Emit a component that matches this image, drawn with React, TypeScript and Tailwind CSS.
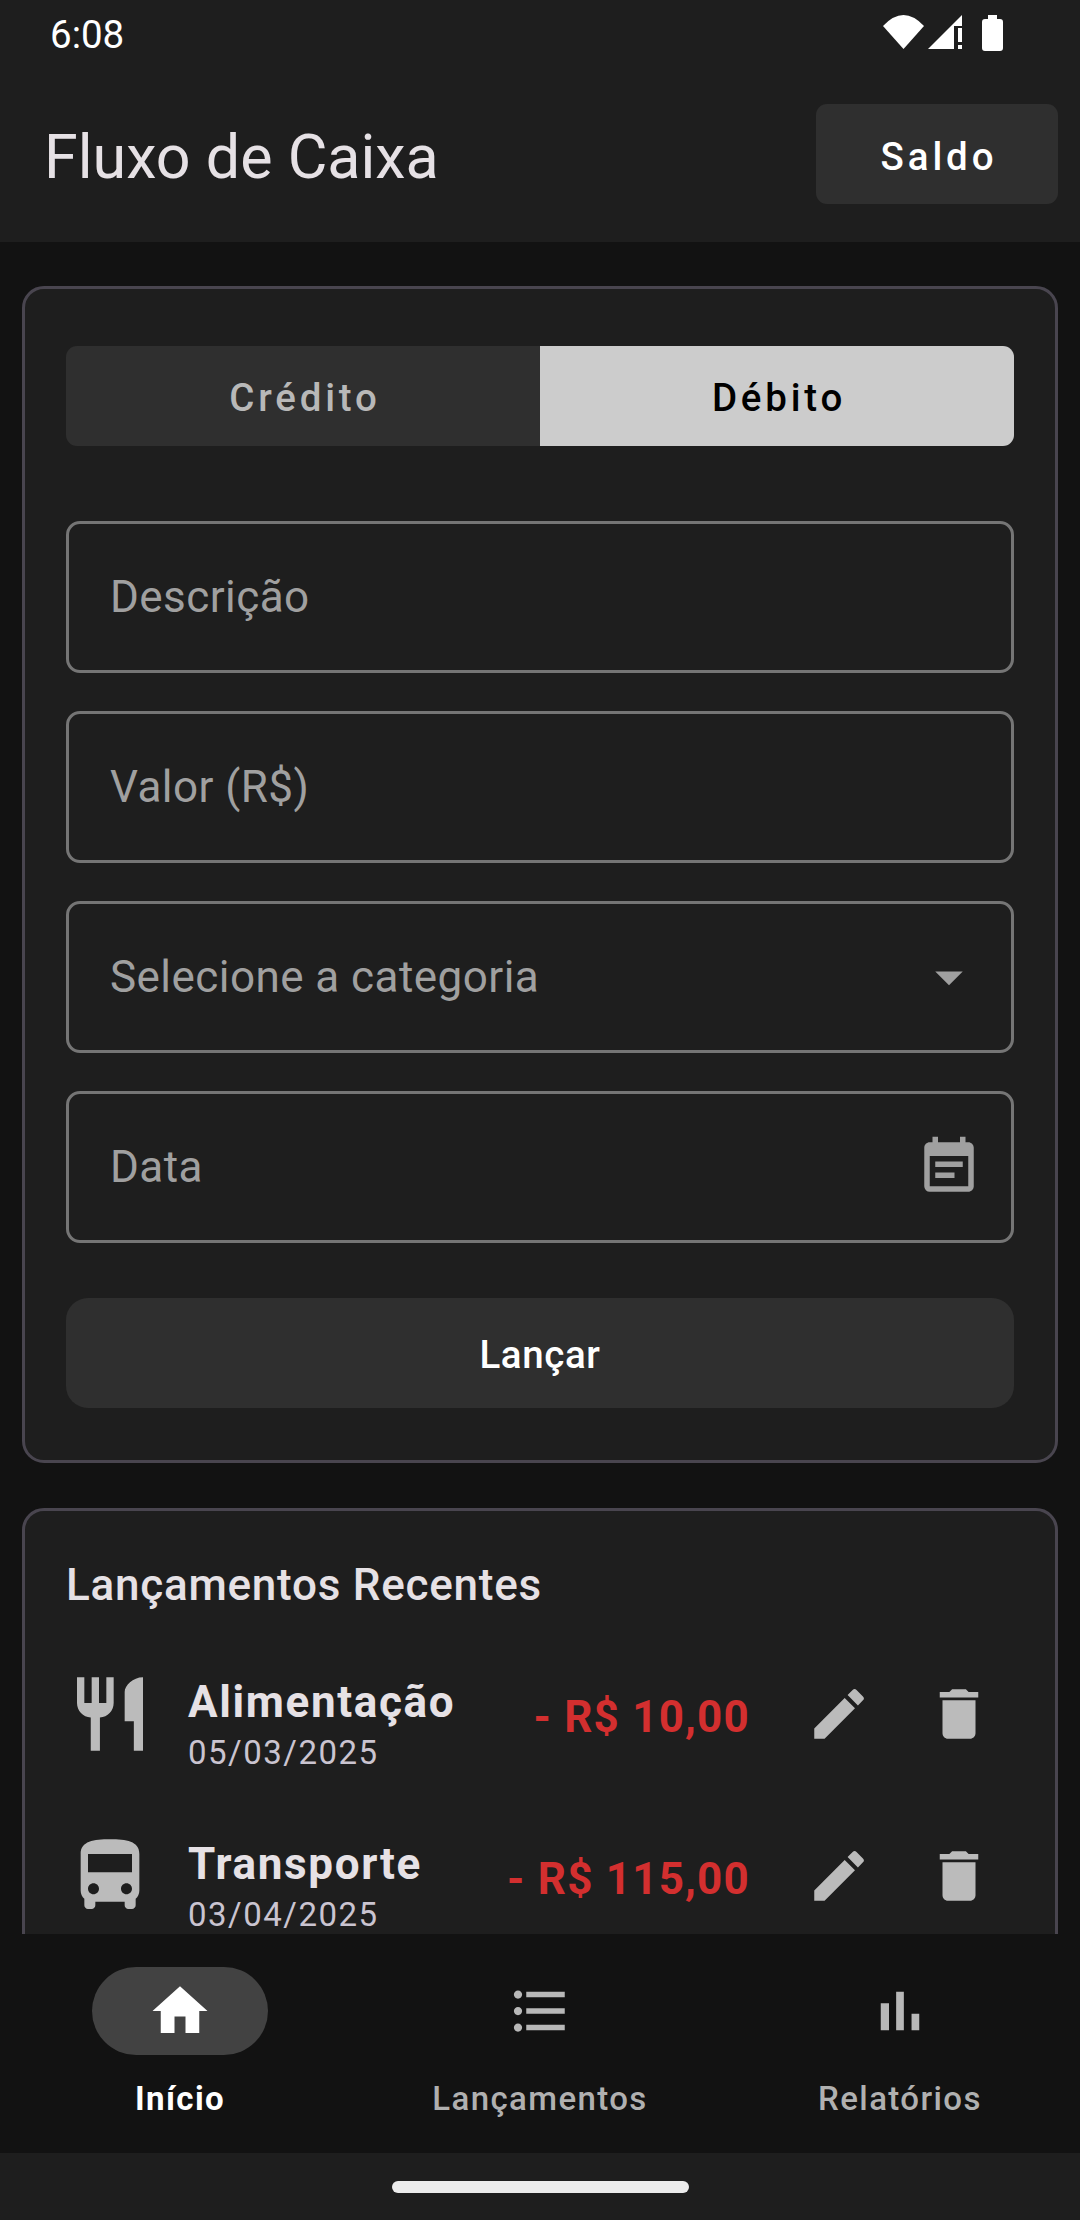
import {
  MdRestaurant,
  MdDirectionsBus,
  MdEdit,
  MdDelete,
  MdHome,
  MdFormatListBulleted,
  MdEventNote,
  MdArrowDropDown,
} from "react-icons/md";
import type { ReactNode } from "react";

const StatusIcons = () => (
  <div className="flex items-start gap-[4px]">
    <svg width="41" height="34" viewBox="0 0 41 34" fill="#fff">
      <path d="M0 11Q20.5 -11 41 11L20.5 34Z" />
    </svg>
    <svg width="34" height="34" viewBox="0 0 34 34" fill="#fff">
      <path d="M0 34L34 0V11H26V34Z" />
      <rect x="30" y="13" width="4" height="14" />
      <rect x="30" y="30" width="4" height="4" />
    </svg>
    <svg width="21" height="36" viewBox="0 0 21 36" fill="#fff" className="ml-[16px]">
      <path d="M6 0H15V4H18Q21 4 21 7V33Q21 36 18 36H3Q0 36 0 33V7Q0 4 3 4H6Z" />
    </svg>
  </div>
);

// the older bar_chart glyph, thinner than the one in react-icons
const BarsIcon = () => (
  <svg width="66" height="66" viewBox="0 0 24 24" fill="currentColor">
    <path d="M5 9.2h3V19H5zM10.6 5h2.8v14h-2.8zm5.6 8H19v6h-2.8z" />
  </svg>
);

const Field = ({ label, icon }: { label: string; icon?: ReactNode }) => (
  <div className="flex h-[152px] items-center justify-between rounded-[14px] border-[3px] border-[#757575] pl-[41px] pr-[29px] text-[44px] tracking-[0.45px] text-[#a0a0a0]">
    <span>{label}</span>
    {icon}
  </div>
);

const Row = ({
  icon,
  title,
  date,
  amount,
}: {
  icon: ReactNode;
  title: string;
  date: string;
  amount: string;
}) => (
  <div className="flex h-[162px] items-center pb-[50px]">
    <div className="flex w-[88px] shrink-0 justify-center text-[#bbbbbb]">{icon}</div>
    <div className="ml-[34px] mt-[22px] flex flex-col">
      <span className="text-[44px] font-bold leading-[52px] tracking-[1.65px] text-[#e6e1e5]">{title}</span>
      <span className="mt-[3px] text-[33px] leading-[44px] tracking-[1.5px] text-[#cac4d0]">{date}</span>
    </div>
    <span className="ml-auto mt-[6px] text-[44px] font-bold tracking-[1.2px] text-[#d32f2f]">{amount}</span>
    <div className="ml-[29px] flex text-[#bbbbbb]">
      <div className="flex w-[120px] justify-center">
        <MdEdit size={66} />
      </div>
      <div className="flex w-[120px] justify-center">
        <MdDelete size={66} />
      </div>
    </div>
  </div>
);

const NavItem = ({ icon, label, active }: { icon: ReactNode; label: string; active?: boolean }) => (
  <div className="flex flex-1 flex-col items-center">
    <div
      className={
        active
          ? "flex h-[88px] w-[176px] items-center justify-center rounded-full bg-[#424242] text-white"
          : "flex h-[88px] w-[176px] items-center justify-center rounded-full text-[#b8b8b8]"
      }
    >
      {icon}
    </div>
    <span
      className={
        active
          ? "mt-[22px] text-[33px] font-bold leading-[44px] tracking-[1.4px] text-white"
          : "mt-[22px] text-[33px] font-medium leading-[44px] tracking-[1.4px] text-[#b0b0b0]"
      }
    >
      {label}
    </span>
  </div>
);

export default function App() {
  return (
    <div className="flex h-[2220px] w-full flex-col overflow-hidden bg-[#121212] font-['Roboto',sans-serif]">
      <header className="h-[242px] shrink-0 bg-[#1e1e1e]">
        <div className="flex h-[66px] items-start justify-between pl-[50px] pr-[77px] pt-[15px]">
          <span className="text-[38.5px] leading-[40px] text-white">6:08</span>
          <StatusIcons />
        </div>
        <div className="flex items-center justify-between pl-[44px] pr-[22px] pt-[38px]">
          <h1 className="h-[100px] text-[61px] leading-[106px] text-[#e6e1e5]">Fluxo de Caixa</h1>
          <button className="h-[100px] w-[242px] rounded-[11px] bg-[#2f2f2f] pl-[4px] pt-[5px] text-[38.5px] font-medium tracking-[3.9px] text-white">
            Saldo
          </button>
        </div>
      </header>

      <main className="flex min-h-0 flex-1 flex-col gap-[45px] overflow-hidden px-[22px] pt-[44px]">
        <section className="shrink-0 rounded-[22px] border-[3px] border-[#49454f] bg-[#1e1e1e] px-[41px] pb-[52px] pt-[57px]">
          <div className="flex h-[100px] overflow-hidden rounded-[11px] text-[38.5px] font-medium tracking-[3.8px]">
            <div className="flex flex-1 items-center justify-center bg-[#2f2f2f] pl-[4px] pt-[3px] text-[#b8b8b8]">Crédito</div>
            <div className="flex flex-1 items-center justify-center bg-[#cccccc] pl-[4px] pt-[3px] text-black">Débito</div>
          </div>
          <div className="mt-[75px] flex flex-col gap-[38px]">
            <Field label="Descrição" />
            <Field label="Valor (R$)" />
            <Field label="Selecione a categoria" icon={<MdArrowDropDown size={66} color="#a0a0a0" />} />
            <Field label="Data" icon={<MdEventNote size={66} color="#a0a0a0" />} />
          </div>
          <button className="mt-[55px] h-[110px] w-full rounded-[22px] bg-[#2f2f2f] pt-[3px] text-[38.5px] font-medium tracking-[0.6px] text-white">
            Lançar
          </button>
        </section>

        <section className="shrink-0 rounded-[22px] border-[3px] border-[#49454f] bg-[#1e1e1e] pb-[80px] pl-[41px] pr-[36px] pt-[44px]">
          <h2 className="text-[44px] font-medium leading-[60px] tracking-[0.75px] text-[#e6e1e5]">Lançamentos Recentes</h2>
          <div className="mt-[43px] flex flex-col">
            <Row icon={<MdRestaurant size={88} />} title="Alimentação" date="05/03/2025" amount="- R$ 10,00" />
            <Row icon={<MdDirectionsBus size={88} />} title="Transporte" date="03/04/2025" amount="- R$ 115,00" />
          </div>
        </section>
      </main>

      <nav className="flex h-[219px] shrink-0 bg-[#121212] pt-[33px]">
        <NavItem icon={<MdHome size={66} />} label="Início" active />
        <NavItem icon={<MdFormatListBulleted size={66} />} label="Lançamentos" />
        <NavItem icon={<BarsIcon />} label="Relatórios" />
      </nav>

      <div className="flex h-[67px] shrink-0 justify-center bg-[#1e1e1e] pt-[28px]">
        <div className="h-[12px] w-[297px] rounded-full bg-[#ececec]" />
      </div>
    </div>
  );
}
